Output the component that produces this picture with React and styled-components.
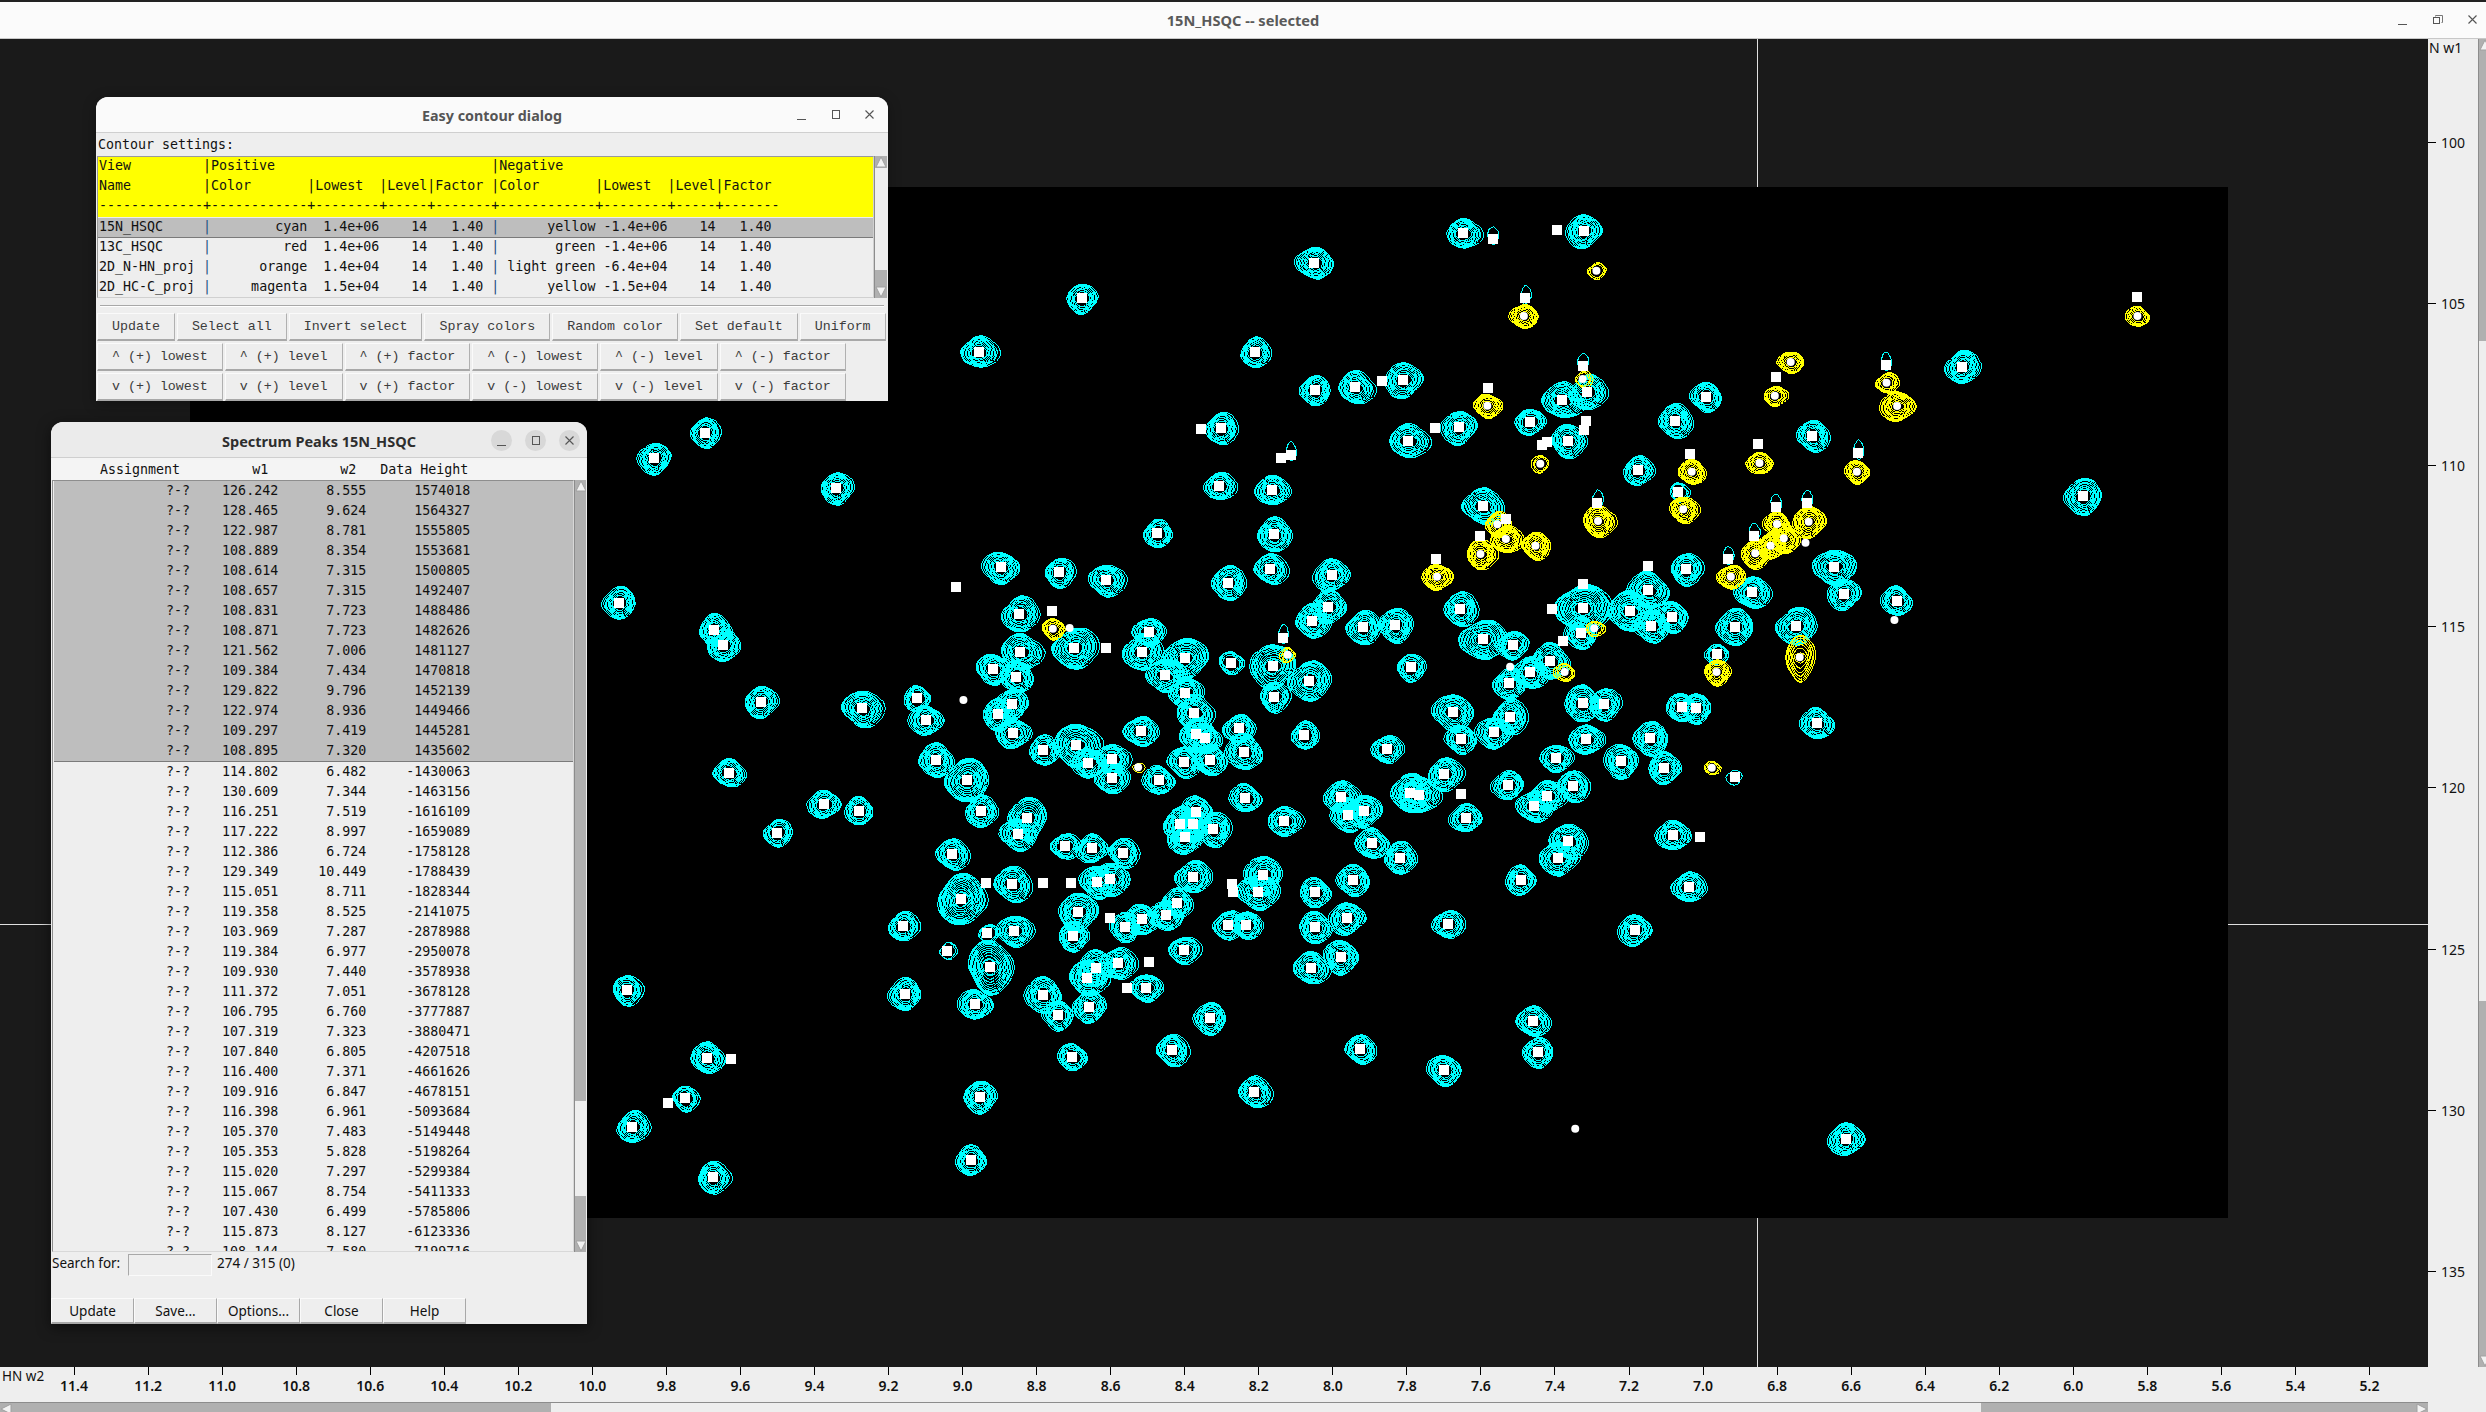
import React from 'react';
import styled, { createGlobalStyle } from 'styled-components';

const GlobalStyle = createGlobalStyle`
html, body { margin: 0; padding: 0; background: #1a1a1a; overflow: hidden; }
`;

// peak lists in the coordinates of the four crops of the plot: [x, y, radius, tallness]
const crops = [
  {
    x: 590, y: 180, k: 1.912,
    cyan: [[1385,248,16],[940,355,14],[743,515,16],[1271,517,14],[1386,630,14],[1463,622,16],[1555,600,17],[1206,745,15],[219,758,14],[123,835,15],[471,924,15],[1203,918,14],[1304,930,15],[1085,1060,13],[1308,1063,16],[785,1162,16],[897,1177,14],[987,1200,16],[1220,1208,16],[1300,1166,15],[1418,1185,16],[56,1268,15],[821,1302,17],[238,1350,15],[255,1395,15],[823,1415,18],[926,1404,20],[1068,1355,14],[1055,1415,18],[1137,1435,20],[1100,1485,17],[1138,1538,15],[770,1467,15],[815,1490,15],[1412,1280,16],[1381,1322,16],[1478,1342,16],[1540,1335,16],[1225,1448,11],[1305,1458,19,1.2],[1375,1502,19],[1308,1550,14]],
    yellow: [[885,1346,10],[1334,1424,7]],
    marks: [[1168,747],[1515,603],[1321,833],[699,1220],[883,1293],[987,1404]],
    caps: [[1340,825],[1325,1373]],
    dots: [[917,1344]],
  },
  {
    x: 590, y: 700, k: 1.912,
    cyan: [[326,5,15],[520,25,18],[625,-5,12],[780,42,15],[806,12,15],[808,100,15],[642,60,15],[1155,38,17],[1158,103,16],[1175,115,15],[1240,85,14],[1250,155,17],[1185,180,15],[1135,185,15],[1053,93,15],[867,150,14],[930,135,20,1.1],[953,188,15],[998,177,15],[998,235,15],[1366,105,13],[1523,147,14],[661,180,16],[720,240,20],[265,218,14],[1087,240,14],[447,312,14],[514,332,13],[747,333,15],[835,355,17,1.2],[818,402,16],[1253,293,14],[1327,363,15],[1158,335,15],[1128,373,16],[1153,373,16],[1192,388,16],[1137,412,16],[358,398,13],[1436,290,16],[1449,345,16],[1479,333,16],[692,462,15],[908,438,13],[960,445,14],[1019,458,14],[1495,430,15],[1548,473,15],[807,552,17],[970,545,16],[995,537,17],[1153,530,16],[1287,525,18],[1277,575,18],[1459,540,15],[1386,577,14],[709,598,22,1.1],[598,678,14],[933,635,18],[1023,680,14],[1055,657,15],[1101,645,15],[1122,608,14],[923,708,14],[811,692,16],[1219,675,14],[1254,675,14],[1386,682,15],[1447,655,16],[683,752,8],[760,700,9],[764,800,20,1.3],[1135,750,14],[967,803,17],[1009,790,16],[951,833,17],[1435,770,16],[1378,803,16],[70,870,14],[602,882,15],[736,912,15],[866,885,17],[895,945,14],[954,920,15],[1063,863,14],[1185,955,15],[224,1073,15],[922,1070,13],[1112,1050,15],[1472,1047,14],[181,1195,12],[745,1190,15],[1270,1175,15],[81,1280,15],[728,1380,14],[235,1432,15]],
    yellow: [[1048,202,5]],
    marks: [[758,548],[866,548],[919,548],[1227,552],[1229,575],[994,655],[1068,785],[1026,863],[269,1078],[149,1209]],
    caps: [],
    dots: [[714,0]],
  },
  {
    x: 1400, y: 180, k: 1.889,
    cyan: [[119,160,15],[347,153,16],[1061,560,16],[578,650,14],[306,660,18],[353,637,17],[15,782,17],[111,742,16],[245,725,13],[519,722,16],[317,782,16],[779,767,15],[449,871,14],[526,936,9],[1290,949,17],[156,978,18],[469,1230,18],[540,1167,15],[820,1160,18],[665,1237,16],[838,1242,15],[938,1262,14],[114,1287,16],[345,1284,24],[434,1293,20],[513,1310,15],[475,1337,16],[342,1358,15],[632,1340,17],[748,1338,18],[157,1378,20],[213,1395,14],[283,1443,17],[245,1477,16],[206,1510,15],[20,1462,13],[599,1422,10]],
    yellow: [[371,272,8],[234,408,12],[1393,408,10],[738,546,11],[345,597,8],[708,647,10],[919,608,10],[939,678,15],[165,677,12],[265,851,8],[551,875,12],[679,849,11],[863,875,11],[535,988,13],[374,1023,15],[184,1033,12],[200,1077,14],[256,1097,13],[152,1122,14],[70,1190,13],[772,1025,15],[712,1032,12],[725,1075,14],[700,1097,13],[671,1120,14],[625,1190,12],[367,1345,8],[311,1476,9],[598,1476,12],[755,1432,12,2]],
    marks: [[297,150],[1392,350],[710,590],[166,625],[66,745],[351,723],[347,750],[268,795],[277,787],[547,822],[676,792],[201,1017],[151,1068],[68,1137],[468,1158],[346,1212],[287,1287],[307,1383]],
    caps: [[175,177],[237,355],[345,557],[918,555],[866,820],[373,968],[769,968],[710,980],[669,1067],[620,1137]],
    dots: [[766,1088],[934,1320],[208,1460]],
  },
  {
    x: 1400, y: 700, k: 1.889,
    cyan: [[100,37,18],[207,50,16],[178,97,16],[115,117,14],[345,10,17],[385,12,15],[532,22,14],[559,25,14],[787,70,15],[351,118,15],[473,115,16],[294,174,14],[418,183,16],[499,203,15],[632,231,7],[84,222,16],[18,278,18],[35,285,18],[124,353,14],[204,255,14],[326,258,15],[278,288,16],[253,318,16],[515,405,15],[317,423,17],[298,474,17],[228,540,14],[545,560,15],[90,672,14],[443,690,15],[251,963,15],[260,1057,14],[83,1110,15],[842,1317,16]],
    yellow: [[589,203,7]],
    marks: [[115,282],[566,410]],
    caps: [],
    dots: [[331,1286]],
  },
];

const noise = (n) => {
  const s = Math.sin(n * 127.1) * 43758.5453;
  return s - Math.floor(s);
};

// one contour ring, snapped to whole pixels so it stays stepped like the original raster
function ring(cx, cy, rx, ry, seed) {
  const a = noise(seed) * 6.28;
  const b = noise(seed + 1) * 6.28;
  let d = '';
  for (let k = 0; k < 32; k++) {
    const t = (k / 32) * Math.PI * 2;
    const w = 1 + 0.04 * Math.cos(4 * t) + 0.06 * Math.cos(2 * t + a) + 0.04 * Math.cos(3 * t + b);
    const x = Math.round(cx + rx * w * Math.cos(t)) + 0.5;
    const y = Math.round(cy + ry * w * Math.sin(t)) + 0.5;
    d += (k ? 'L' : 'M') + x + ' ' + y;
  }
  return d + 'Z';
}

function contour(cx, cy, r, tall, seed, inner) {
  let d = '';
  const rx0 = r * 1.12;
  const ry0 = r * tall;
  const n = Math.max(1, Math.floor((rx0 - inner) / 1.35) + 1);
  for (let i = 0; i < n; i++) {
    const shift = i === 0 ? noise(seed + 5) * 3 - 1 : 0;
    const ry = ry0 - (ry0 - inner) * (i / n) * (i / n + 0.3);
    d += ring(cx + shift, cy, rx0 - 1.35 * i, Math.max(ry, inner), seed);
  }
  return d;
}

function buildPlot() {
  let cyan = '', yellow = '', white = '';
  const dots = [];
  let seed = 1;
  const square = (x, y) => {
    white += `M${Math.round(x - 5)} ${Math.round(y - 5)}h10v10h-10z`;
  };
  crops.forEach((c) => {
    const at = ([X, Y]) => [c.x + X / c.k, c.y + Y / 3];
    c.cyan.forEach((p) => {
      const [x, y] = at(p);
      cyan += contour(x, y, p[2], p[3] || 1, (seed += 3), 7);
      square(x, y);
    });
    c.yellow.forEach((p) => {
      const [x, y] = at(p);
      yellow += contour(x, y, p[2], p[3] || 1, (seed += 3), 5);
      dots.push([x, y]);
    });
    c.caps.forEach((p) => {
      const [x, y] = at(p);
      cyan += ring(x, y - 4, 5, 9, (seed += 3));
    });
    c.caps.concat(c.marks).forEach((p) => {
      const [x, y] = at(p);
      square(x, y);
    });
    c.dots.forEach((p) => dots.push(at(p)));
  });
  return { cyan, yellow, white, dots };
}

const plot = buildPlot();

const pad = (s, n) => String(s).padStart(n);

const contourHeader = [
  'View         |Positive                           |Negative',
  'Name         |Color       |Lowest  |Level|Factor |Color       |Lowest  |Level|Factor',
  '-------------+------------+--------+-----+-------+------------+--------+-----+-------',
];

const contourRows = [
  ['15N_HSQC', 'cyan', '1.4e+06', 'yellow', '-1.4e+06'],
  ['13C_HSQC', 'red', '1.4e+06', 'green', '-1.4e+06'],
  ['2D_N-HN_proj', 'orange', '1.4e+04', 'light green', '-6.4e+04'],
  ['2D_HC-C_proj', 'magenta', '1.5e+04', 'yellow', '-1.5e+04'],
];

const contourTop = ['Update', 'Select all', 'Invert select', 'Spray colors', 'Random color', 'Set default', 'Uniform'];
const contourSteps = ['(+) lowest', '(+) level', '(+) factor', '(-) lowest', '(-) level', '(-) factor'];

const peakRows = [
  ['126.242', '8.555', '1574018'], ['128.465', '9.624', '1564327'], ['122.987', '8.781', '1555805'],
  ['108.889', '8.354', '1553681'], ['108.614', '7.315', '1500805'], ['108.657', '7.315', '1492407'],
  ['108.831', '7.723', '1488486'], ['108.871', '7.723', '1482626'], ['121.562', '7.006', '1481127'],
  ['109.384', '7.434', '1470818'], ['129.822', '9.796', '1452139'], ['122.974', '8.936', '1449466'],
  ['109.297', '7.419', '1445281'], ['108.895', '7.320', '1435602'], ['114.802', '6.482', '-1430063'],
  ['130.609', '7.344', '-1463156'], ['116.251', '7.519', '-1616109'], ['117.222', '8.997', '-1659089'],
  ['112.386', '6.724', '-1758128'], ['129.349', '10.449', '-1788439'], ['115.051', '8.711', '-1828344'],
  ['119.358', '8.525', '-2141075'], ['103.969', '7.287', '-2878988'], ['119.384', '6.977', '-2950078'],
  ['109.930', '7.440', '-3578938'], ['111.372', '7.051', '-3678128'], ['106.795', '6.760', '-3777887'],
  ['107.319', '7.323', '-3880471'], ['107.840', '6.805', '-4207518'], ['116.400', '7.371', '-4661626'],
  ['109.916', '6.847', '-4678151'], ['116.398', '6.961', '-5093684'], ['105.370', '7.483', '-5149448'],
  ['105.353', '5.828', '-5198264'], ['115.020', '7.297', '-5299384'], ['115.067', '8.754', '-5411333'],
  ['107.430', '6.499', '-5785806'], ['115.873', '8.127', '-6123336'], ['108.144', '7.580', '-7199716'],
];

const ppmTicks = Array.from({ length: 32 }, (_, i) => (11.4 - i * 0.2).toFixed(1));
const nitrogenTicks = [100, 105, 110, 115, 120, 125, 130, 135];

function MinIcon() {
  return <svg width="12" height="12" viewBox="0 0 12 12"><path d="M1 10.5h9" stroke="#555" strokeWidth="1" /></svg>;
}
function MaxIcon() {
  return <svg width="12" height="12" viewBox="0 0 12 12"><rect x="2.5" y="1.5" width="7" height="8" fill="none" stroke="#555" /></svg>;
}
function RestoreIcon() {
  return <svg width="12" height="12" viewBox="0 0 12 12"><path d="M3.5 2.5v-1h7v7h-1" fill="none" stroke="#777" /><rect x="1.5" y="3.5" width="6" height="6" fill="none" stroke="#555" /></svg>;
}
function CloseIcon() {
  return <svg width="12" height="12" viewBox="0 0 12 12"><path d="M1.5 1.5l8 8M9.5 1.5l-8 8" stroke="#555" strokeWidth="1.1" /></svg>;
}

function Arrow({ dir }) {
  const pts = { up: '6,1 11,11 1,11', down: '1,1 11,1 6,11', left: '11,1 11,11 1,6', right: '1,1 1,11 11,6' }[dir];
  return (
    <svg width="12" height="12" viewBox="0 0 12 12" style={{ flex: 'none', display: 'block' }}>
      <polygon points={pts} fill="#f2f2f2" stroke="#a0a0a0" />
    </svg>
  );
}

function ContourWindow() {
  return (
    <DialogWindow $left={96} $top={97} $w={792} $h={304}>
      <DialogTitle $h={36}>
        <TitleText>Easy contour dialog</TitleText>
        <PlainControls>
          <MinIcon /><MaxIcon /><CloseIcon />
        </PlainControls>
      </DialogTitle>
      <MonoLine>Contour settings:</MonoLine>
      <ListRow $h={142}>
        <ListBox>
          <HeaderBlock>{contourHeader.join('\n')}</HeaderBlock>
          {contourRows.map((r, i) => (
            <ContourRow key={r[0]} $selected={i === 0}>
              {r[0].padEnd(13)}<Bar>|</Bar>{pad(r[1], 12)}  {r[2]}    14   1.40 <Bar>|</Bar>{pad(r[3], 12)} {r[4]}    14   1.40
            </ContourRow>
          ))}
        </ListBox>
        <VBar $w={13}>
          <Arrow dir="up" />
          <Thumb $size={102} />
          <Trough />
          <Arrow dir="down" />
        </VBar>
      </ListRow>
      <Separator />
      <ButtonRow>
        {contourTop.map((t) => <TkButton key={t}>{t}</TkButton>)}
      </ButtonRow>
      <ButtonRow>
        {contourSteps.map((t) => <TkButton key={t}>{'^ ' + t}</TkButton>)}
      </ButtonRow>
      <ButtonRow>
        {contourSteps.map((t) => <TkButton key={t}>{'v ' + t}</TkButton>)}
      </ButtonRow>
    </DialogWindow>
  );
}

function PeaksWindow() {
  return (
    <DialogWindow $left={51} $top={422} $w={536} $h={902} $active>
      <DialogTitle $h={36} $active>
        <TitleText $active>Spectrum Peaks 15N_HSQC</TitleText>
        <RoundControls>
          <RoundButton><MinIcon /></RoundButton>
          <RoundButton><MaxIcon /></RoundButton>
          <RoundButton><CloseIcon /></RoundButton>
        </RoundControls>
      </DialogTitle>
      <PeakHeader>{'      Assignment         w1         w2   Data Height'}</PeakHeader>
      <ListRow $h={772}>
        <PeakList>
          <Selection>
            {peakRows.slice(0, 14).map((r, i) => <PeakRow key={i}>{pad('?-?', 17) + pad(r[0], 11) + pad(r[1], 11) + pad(r[2], 13)}</PeakRow>)}
          </Selection>
          {peakRows.slice(14).map((r, i) => <PeakRow key={i}>{pad('?-?', 17) + pad(r[0], 11) + pad(r[1], 11) + pad(r[2], 13)}</PeakRow>)}
        </PeakList>
        <VBar $w={12}>
          <Arrow dir="up" />
          <Trough />
          <Thumb $size={95} />
          <Trough $fixed={44} />
          <Arrow dir="down" />
        </VBar>
      </ListRow>
      <SearchRow>
        <SearchLabel>Search for:</SearchLabel>
        <SearchBox />
        <SansLabel>274 / 315 (0)</SansLabel>
      </SearchRow>
      <FooterButtons>
        {['Update', 'Save...', 'Options...', 'Close', 'Help'].map((t) => <FooterButton key={t}>{t}</FooterButton>)}
      </FooterButtons>
    </DialogWindow>
  );
}

export default function App() {
  return (
    <>
      <GlobalStyle />
      <Screen>
        <TopBar>
          <TopTitle>15N_HSQC -- selected</TopTitle>
          <TopControls>
            <MinIcon /><RestoreIcon /><CloseIcon />
          </TopControls>
        </TopBar>
        <Middle>
          <SpectrumArea>
            <CrossV />
            <CrossH />
            <PlotCanvas viewBox="190 187 2038 1031" width="2038" height="1031">
              <path d={plot.cyan} fill="none" stroke="#00ffff" strokeWidth="1" shapeRendering="crispEdges" />
              <path d={plot.yellow} fill="none" stroke="#ffff00" strokeWidth="1" shapeRendering="crispEdges" />
              <path d={plot.white} fill="#fff" shapeRendering="crispEdges" />
              {plot.dots.map(([x, y], i) => <circle key={i} cx={x} cy={y} r="4" fill="#fff" />)}
            </PlotCanvas>
          </SpectrumArea>
          <RightAxis>
            <AxisTitle>N w1</AxisTitle>
            {nitrogenTicks.map((v) => (
              <RightTick key={v}>
                <TickDash />
                <span>{v}</span>
              </RightTick>
            ))}
          </RightAxis>
          <VBar $w={8} $wide>
            <Arrow dir="up" />
            <Trough $fixed={290} />
            <Thumb $size={660} />
            <Trough />
            <Arrow dir="down" />
          </VBar>
        </Middle>
        <BottomAxis>
          <AxisName>HN w2</AxisName>
          {ppmTicks.map((v) => (
            <BottomTick key={v}>
              <TickStem />
              <TickLabel>{v}</TickLabel>
            </BottomTick>
          ))}
        </BottomAxis>
        <HScrollLine>
          <HBar>
            <Arrow dir="left" />
            <Trough $fixed={539} />
            <Thumb $size={1430} />
            <Trough />
            <Arrow dir="right" />
          </HBar>
        </HScrollLine>
        <ContourWindow />
        <PeaksWindow />
      </Screen>
    </>
  );
}

const Screen = styled.div`
position: relative;
width: 2486px;
height: 1412px;
display: flex;
flex-direction: column;
background: #eeeeee;
overflow: hidden;
font-family: "Noto Sans", sans-serif;
color: #111;
`;

const TopBar = styled.div`
position: relative;
flex: none;
height: 36px;
box-sizing: content-box;
border-top: 2px solid #222;
border-bottom: 1px solid #c8c8c8;
background: #fbfbfb;
display: flex;
align-items: center;
justify-content: center;
`;

const TopTitle = styled.div`
font-size: 14.6px;
font-weight: 700;
color: #5a5a5a;
`;

const TopControls = styled.div`
position: absolute;
right: 7px;
top: 12px;
display: flex;
gap: 23px;
`;

const Middle = styled.div`
flex: 1;
display: flex;
min-height: 0;
`;

const SpectrumArea = styled.div`
position: relative;
flex: 1;
background: #1a1a1a;
padding: 148px 0 0 190px;
`;

const CrossV = styled.div`
position: absolute;
left: 1757px;
top: 0;
bottom: 0;
width: 1px;
background: #e0e0e0;
`;

const CrossH = styled.div`
position: absolute;
left: 0;
right: 0;
top: 885px;
height: 1px;
background: #e0e0e0;
`;

const PlotCanvas = styled.svg`
position: relative;
display: block;
background: #000;
`;

const RightAxis = styled.div`
flex: none;
width: 50px;
display: flex;
flex-direction: column;
background: #eeeeee;
font-size: 14px;
`;

const AxisTitle = styled.div`
height: 18px;
padding-left: 1px;
line-height: 18px;
margin-bottom: 5px;
`;

const RightTick = styled.div`
flex: none;
height: 161.3px;
display: flex;
align-items: center;
gap: 5px;
`;

const TickDash = styled.i`
display: block;
width: 8px;
height: 1px;
background: #000;
`;

const BottomAxis = styled.div`
position: relative;
flex: none;
width: 2391px;
height: 35px;
padding-left: 37px;
display: flex;
background: #eeeeee;
`;

const AxisName = styled.div`
position: absolute;
left: 2px;
top: 0;
font-size: 13.5px;
line-height: 19px;
`;

const BottomTick = styled.div`
flex: none;
width: 74.06px;
display: flex;
flex-direction: column;
align-items: center;
`;

const TickStem = styled.i`
display: block;
width: 1px;
height: 8px;
background: #000;
`;

const TickLabel = styled.div`
margin-top: 1px;
font-size: 14px;
font-weight: 600;
line-height: 20px;
`;

const HScrollLine = styled.div`
flex: none;
height: 10px;
width: 2428px;
`;

const HBar = styled.div`
height: 10px;
display: flex;
background: #b0b0b0;
border-top: 1px solid #8c8c8c;
box-sizing: border-box;
overflow: hidden;
`;

const VBar = styled.div`
flex: none;
width: ${(p) => p.$w}px;
display: flex;
flex-direction: column;
background: #b0b0b0;
border-left: 1px solid #8c8c8c;
box-sizing: border-box;
overflow: hidden;
`;

const Trough = styled.div`
${(p) => (p.$fixed ? `flex: none; flex-basis: ${p.$fixed}px;` : 'flex: 1;')}
background: #b0b0b0;
`;

const Thumb = styled.div`
flex: none;
flex-basis: ${(p) => p.$size}px;
background: #eeeeee;
`;

const DialogWindow = styled.div`
position: absolute;
left: ${(p) => p.$left}px;
top: ${(p) => p.$top}px;
width: ${(p) => p.$w}px;
height: ${(p) => p.$h}px;
display: flex;
flex-direction: column;
background: #eeeeee;
border-radius: 12px 12px 0 0;
box-shadow: 0 3px 14px rgba(0, 0, 0, ${(p) => (p.$active ? 0.55 : 0.3)});
overflow: hidden;
`;

const DialogTitle = styled.div`
position: relative;
flex: none;
height: ${(p) => p.$h}px;
box-sizing: border-box;
padding-top: 2px;
display: flex;
align-items: center;
justify-content: center;
background: ${(p) => (p.$active ? '#ebebeb' : '#fafafa')};
border-bottom: 1px solid #cfcfcf;
`;

const TitleText = styled.div`
font-size: ${(p) => (p.$active ? 14.5 : 14.3)}px;
font-weight: 700;
color: ${(p) => (p.$active ? '#2e2e2e' : '#555')};
`;

const PlainControls = styled.div`
position: absolute;
right: 12px;
top: 12px;
display: flex;
gap: 22px;
`;

const RoundControls = styled.div`
position: absolute;
right: 7px;
top: 8px;
display: flex;
gap: 13px;
`;

const RoundButton = styled.div`
width: 21px;
height: 21px;
border-radius: 50%;
background: #d8d8d8;
display: flex;
align-items: center;
justify-content: center;
`;

const MonoLine = styled.div`
flex: none;
height: 23px;
padding-left: 2px;
font: 13.3px/24px "DejaVu Sans Mono", monospace;
white-space: pre;
`;

const ListRow = styled.div`
flex: none;
height: ${(p) => p.$h}px;
display: flex;
padding-left: 1px;
`;

const ListBox = styled.div`
flex: none;
width: 777px;
border: 1px solid #d0d0d0;
border-left-color: #9a9a9a;
border-top-color: #9a9a9a;
box-sizing: border-box;
overflow: hidden;
font: 13.3px/18px "DejaVu Sans Mono", monospace;
white-space: pre;
`;

const HeaderBlock = styled.div`
height: 61px;
margin: -1px 0 1px 0;
line-height: 20px;
padding-left: 1px;
background: #ffff00;
`;

const Bar = styled.span`
color: #1d4f80;
`;

const ContourRow = styled.div`
height: ${(p) => (p.$selected ? 19 : 20)}px;
padding-left: 1px;
background: ${(p) => (p.$selected ? '#bebebe' : 'transparent')};
border-bottom: ${(p) => (p.$selected ? '1px solid #7a7a7a' : 'none')};
`;

const Separator = styled.div`
flex: none;
height: 1px;
margin: 7px 4px 6px 4px;
background: #a8a8a8;
border-bottom: 1px solid #fff;
`;

const ButtonRow = styled.div`
flex: none;
display: flex;
gap: 2px;
padding-left: 1px;
margin-bottom: 2px;
`;

const TkButton = styled.div`
flex: none;
box-sizing: border-box;
height: 28px;
padding: 0 14px;
background: #eeeeee;
border-top: 1px solid #fafafa;
border-left: 1px solid #fafafa;
border-right: 1px solid #b0b0b0;
border-bottom: 2px solid #a8a8a8;
font: 13.3px/26px "Liberation Mono", monospace;
color: #3c3c3c;
white-space: pre;
`;

const PeakHeader = styled.div`
flex: none;
height: 22px;
padding-left: 1px;
font: 13.3px/24px "DejaVu Sans Mono", monospace;
white-space: pre;
background: #f4f4f4;
`;

const PeakList = styled.div`
flex: none;
width: 522px;
border: 1px solid #d8d8d8;
border-left-color: #8e8e8e;
border-top-color: #8e8e8e;
box-sizing: border-box;
overflow: hidden;
font: 13.3px/20px "DejaVu Sans Mono", monospace;
white-space: pre;
padding-left: 1px;
`;

const Selection = styled.div`
margin-left: 0;
background: #bebebe;
border-bottom: 1px solid #7a7a7a;
`;

const PeakRow = styled.div`
height: 20px;
`;

const SearchRow = styled.div`
flex: none;
height: 46px;
padding: 2px 0 0 1px;
box-sizing: border-box;
display: flex;
align-items: flex-start;
`;

const SansLabel = styled.div`
margin: -1px 0 0 5px;
font-size: 13.5px;
line-height: 20px;
`;

const SearchLabel = styled.div`
width: 76px;
margin-top: -1px;
font-size: 13.5px;
line-height: 20px;
`;

const SearchBox = styled.div`
width: 84px;
height: 22px;
box-sizing: border-box;
border: 1px solid #a8a8a8;
border-right-color: #fafafa;
border-bottom-color: #fafafa;
`;

const FooterButtons = styled.div`
flex: none;
display: flex;
`;

const FooterButton = styled.div`
flex: none;
width: 83px;
height: 26px;
box-sizing: border-box;
background: #eeeeee;
border-top: 1px solid #fafafa;
border-left: 1px solid #fafafa;
border-right: 1px solid #a8a8a8;
border-bottom: 2px solid #a8a8a8;
text-align: center;
font-size: 13.5px;
line-height: 24px;
`;
